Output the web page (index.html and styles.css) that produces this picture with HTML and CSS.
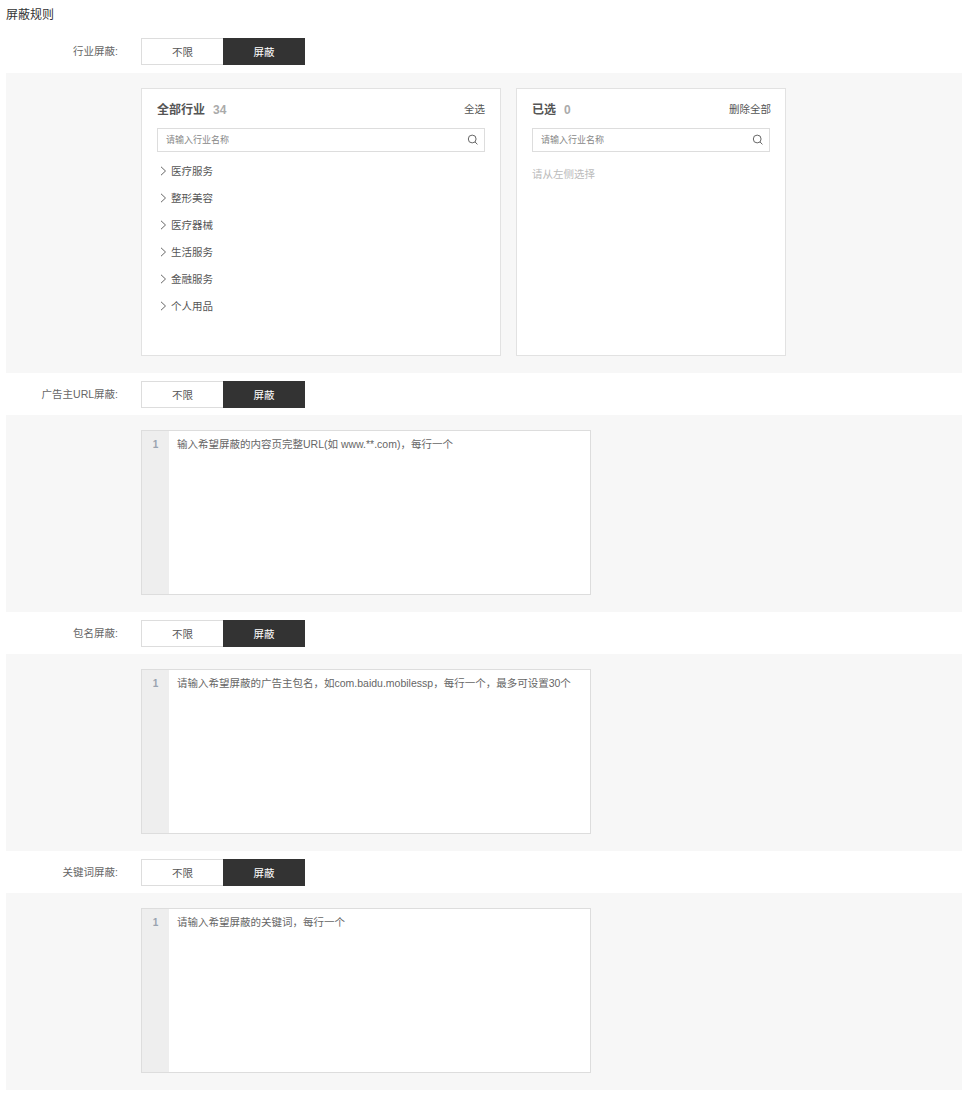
FILE: index.html
```html
<!DOCTYPE html>
<html>
<head>
    <title>屏蔽规则</title>
    <meta charset="UTF-8">
    <link rel="stylesheet" href="styles.css">
</head>
<body>
    <div class="page">
        <h1 class="page-title">屏蔽规则</h1>

        <div class="form-row">
            <label class="row-label">行业屏蔽:</label>
            <div class="toggle">
                <span class="toggle-item">不限</span>
                <span class="toggle-item active">屏蔽</span>
            </div>
        </div>
        <div class="panel panel-industry">
            <div class="card card-all">
                <div class="card-head">
                    <span class="card-title">全部行业<em class="card-count">34</em></span>
                    <a class="card-action">全选</a>
                </div>
                <div class="search">
                    <span class="search-text">请输入行业名称</span>
                    <svg class="search-icon" width="12" height="12" viewBox="0 0 12 12"><circle cx="5.2" cy="5" r="3.9"/><path d="M8 7.9L10.4 10.4"/></svg>
                </div>
                <ul class="tree">
                    <li class="tree-item"><svg class="arrow" width="7" height="10" viewBox="0 0 7 10"><path d="M1 .8L5.5 5 1 9.2"/></svg>医疗服务</li>
                    <li class="tree-item"><svg class="arrow" width="7" height="10" viewBox="0 0 7 10"><path d="M1 .8L5.5 5 1 9.2"/></svg>整形美容</li>
                    <li class="tree-item"><svg class="arrow" width="7" height="10" viewBox="0 0 7 10"><path d="M1 .8L5.5 5 1 9.2"/></svg>医疗器械</li>
                    <li class="tree-item"><svg class="arrow" width="7" height="10" viewBox="0 0 7 10"><path d="M1 .8L5.5 5 1 9.2"/></svg>生活服务</li>
                    <li class="tree-item"><svg class="arrow" width="7" height="10" viewBox="0 0 7 10"><path d="M1 .8L5.5 5 1 9.2"/></svg>金融服务</li>
                    <li class="tree-item"><svg class="arrow" width="7" height="10" viewBox="0 0 7 10"><path d="M1 .8L5.5 5 1 9.2"/></svg>个人用品</li>
                </ul>
            </div>
            <div class="card card-selected">
                <div class="card-head">
                    <span class="card-title">已选<em class="card-count">0</em></span>
                    <a class="card-action">删除全部</a>
                </div>
                <div class="search">
                    <span class="search-text">请输入行业名称</span>
                    <svg class="search-icon" width="12" height="12" viewBox="0 0 12 12"><circle cx="5.2" cy="5" r="3.9"/><path d="M8 7.9L10.4 10.4"/></svg>
                </div>
                <p class="empty-tip">请从左侧选择</p>
            </div>
        </div>

        <div class="form-row">
            <label class="row-label">广告主URL屏蔽:</label>
            <div class="toggle">
                <span class="toggle-item">不限</span>
                <span class="toggle-item active">屏蔽</span>
            </div>
        </div>
        <div class="panel">
            <div class="editor">
                <div class="gutter">1</div>
                <div class="editor-text">输入希望屏蔽的内容页完整URL(如 www.**.com)，每行一个</div>
            </div>
        </div>

        <div class="form-row">
            <label class="row-label">包名屏蔽:</label>
            <div class="toggle">
                <span class="toggle-item">不限</span>
                <span class="toggle-item active">屏蔽</span>
            </div>
        </div>
        <div class="panel">
            <div class="editor">
                <div class="gutter">1</div>
                <div class="editor-text">请输入希望屏蔽的广告主包名，如com.baidu.mobilessp，每行一个，最多可设置30个</div>
            </div>
        </div>

        <div class="form-row">
            <label class="row-label">关键词屏蔽:</label>
            <div class="toggle">
                <span class="toggle-item">不限</span>
                <span class="toggle-item active">屏蔽</span>
            </div>
        </div>
        <div class="panel">
            <div class="editor">
                <div class="gutter">1</div>
                <div class="editor-text">请输入希望屏蔽的关键词，每行一个</div>
            </div>
        </div>
    </div>
</body>
</html>
```

FILE: styles.css
```css
html, body { margin: 0; padding: 0; background: #fff; }
body { font-family: "Liberation Sans", "Noto Sans CJK SC", sans-serif; font-size: 10.5px; color: #333; }
.page { padding: 8px 0 13px 6px; }
.page-title { margin: 0 0 15px; font-size: 12px; font-weight: normal; line-height: 15px; color: #333; }

.form-row { display: flex; align-items: flex-start; height: 27px; margin-bottom: 8px; }
.panel + .form-row { margin-top: 8px; margin-bottom: 7px; }
.row-label { width: 112px; margin-right: 23px; text-align: right; line-height: 27px; color: #666; white-space: nowrap; }
.toggle { display: flex; width: 164px; height: 27px; }
.toggle-item { width: 82px; box-sizing: border-box; border: 1px solid #ddd; line-height: 26px; text-align: center; color: #555; background: #fff; }
.toggle-item:first-child { border-right: none; }
.toggle-item.active { border-color: #333; background: #333; color: #fff; }

.panel { display: flex; height: 167px; padding: 15px 0 15px 135px; background: #f7f7f7; }
.panel-industry { height: 270px; gap: 15px; }

.card { box-sizing: border-box; height: 268px; padding: 0 15px; border: 1px solid #e2e2e2; background: #fff; }
.card-all { width: 360px; }
.card-selected { width: 270px; }
.card-head { display: flex; justify-content: space-between; align-items: center; height: 39px; }
.card-title { font-size: 12px; font-weight: bold; color: #555; }
.card-count { margin-left: 8px; font-style: normal; color: #aaa; }
.card-action { color: #555; }
.card-selected .card-action { margin-right: -1px; }

.search { display: flex; justify-content: space-between; align-items: center; box-sizing: border-box; height: 24px; padding: 0 5px 0 8px; border: 1px solid #ddd; }
.search-text { font-size: 9px; line-height: 20px; color: #888; }
.search-icon { fill: none; stroke: #666; stroke-width: 1; }

.tree { margin: 5px 0 0; padding: 0; list-style: none; }
.tree-item { display: flex; align-items: center; height: 27px; padding-left: 3px; color: #555; }
.arrow { flex: none; margin-right: 4px; fill: none; stroke: #666; stroke-width: 1; }
.empty-tip { margin: 16px 0 0; line-height: 12px; color: #bbb; }

.editor { display: flex; box-sizing: border-box; width: 450px; height: 165px; border: 1px solid #ddd; background: #fff; }
.gutter { flex: none; width: 27px; padding-top: 7px; background: #eee; color: #99a3b0; font-weight: bold; font-size: 10px; line-height: 14px; text-align: center; }
.editor-text { padding: 6px 0 0 8px; line-height: 14px; color: #666; white-space: nowrap; }
```
